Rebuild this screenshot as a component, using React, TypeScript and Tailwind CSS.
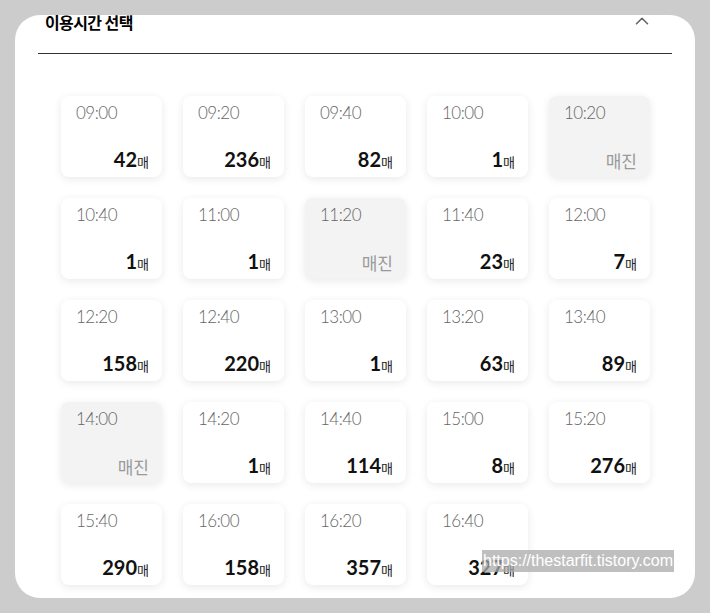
import { ChevronUp } from "lucide-react";

type Slot = { time: string; count: number | null };

const slots: Slot[] = [
  { time: "09:00", count: 42 },
  { time: "09:20", count: 236 },
  { time: "09:40", count: 82 },
  { time: "10:00", count: 1 },
  { time: "10:20", count: null },
  { time: "10:40", count: 1 },
  { time: "11:00", count: 1 },
  { time: "11:20", count: null },
  { time: "11:40", count: 23 },
  { time: "12:00", count: 7 },
  { time: "12:20", count: 158 },
  { time: "12:40", count: 220 },
  { time: "13:00", count: 1 },
  { time: "13:20", count: 63 },
  { time: "13:40", count: 89 },
  { time: "14:00", count: null },
  { time: "14:20", count: 1 },
  { time: "14:40", count: 114 },
  { time: "15:00", count: 8 },
  { time: "15:20", count: 276 },
  { time: "15:40", count: 290 },
  { time: "16:00", count: 158 },
  { time: "16:20", count: 357 },
  { time: "16:40", count: 327 },
];

function SlotCard({ slot }: { slot: Slot }) {
  const soldOut = slot.count === null;
  return (
    <div
      className={`flex h-[81px] flex-col justify-between rounded-[8px] pb-[8px] pl-[15px] pr-[13px] pt-[4px] shadow-[0_2px_8px_rgba(0,0,0,0.09)] ${
        soldOut ? "bg-[#f3f3f3]" : "bg-white"
      }`}
    >
      <div className="font-['Lato',sans-serif] text-[17px] font-light tracking-[-0.5px] text-[#666]">
        {slot.time}
      </div>
      <div className="flex items-baseline justify-end">
        {soldOut ? (
          <span className="font-['Noto_Sans_CJK_KR',sans-serif] text-[17px] leading-none text-[#9a9a9a]">
            매진
          </span>
        ) : (
          <>
            <span className="font-['Lato',sans-serif] text-[20px] font-bold leading-none text-[#111]">
              {slot.count}
            </span>
            <span className="font-['Noto_Sans_CJK_KR',sans-serif] text-[13px] leading-none text-[#222]">
              매
            </span>
          </>
        )}
      </div>
    </div>
  );
}

export default function App() {
  return (
    <div className="relative h-[613px] w-[710px] overflow-hidden bg-[#cccccc] pl-[15px] pt-[15px]">
      <div className="flow-root h-[583px] w-[680px] rounded-[25px] bg-white">
        {/* Header */}
        <div className="-mt-[5px] flex h-[43px] items-start justify-between pl-[30px] pr-[42px]">
          <span className="font-['Noto_Sans_CJK_KR',sans-serif] text-[16px] font-bold tracking-[-0.6px] text-black">
            이용시간 선택
          </span>
          <ChevronUp className="mt-[0px] h-[22px] w-[22px] text-[#666]" strokeWidth={1.75} />
        </div>
        <div className="mx-[23px] h-px bg-[#333]" />

        {/* Slots */}
        <div className="grid grid-cols-5 gap-x-[21px] gap-y-[21px] pl-[46px] pr-[45px] pt-[42px]">
          {slots.map((s) => (
            <SlotCard key={s.time} slot={s} />
          ))}
        </div>
      </div>

      <div className="absolute left-[482px] top-[550px] bg-[rgba(170,170,170,0.75)] px-[1px] font-['Liberation_Sans',sans-serif] text-[16px] leading-[22px] text-white">
        https://thestarfit.tistory.com
      </div>
    </div>
  );
}
